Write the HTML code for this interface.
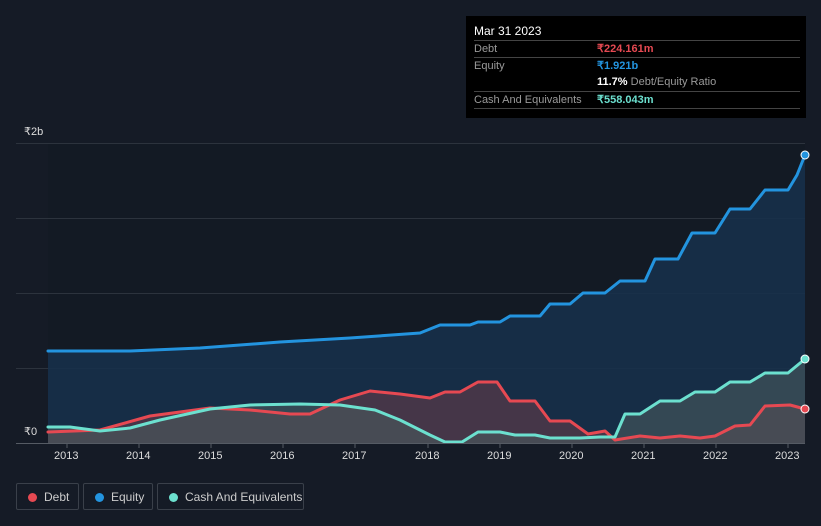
<!DOCTYPE html>
<html><head><meta charset="utf-8"><style>
body{margin:0;width:821px;height:526px;background:#151b26;font-family:"Liberation Sans",sans-serif;overflow:hidden;position:relative}
.tip{position:absolute;left:466px;top:16px;width:340px;height:102px;background:#000;color:#fff;font-size:11px}
.tip .row{position:absolute;left:8px;width:326px;border-top:1px solid #444;height:17px;line-height:17px;color:#9a9a9a}
.tip .v{position:absolute;left:123px;font-weight:bold}
.leg{position:absolute;top:483px;height:27px;border:1px solid #3a404a;border-radius:2px;color:#ccc;font-size:12px;line-height:27px;box-sizing:border-box;padding-left:27px}
.leg i{position:absolute;left:11px;top:9px;width:9px;height:9px;border-radius:50%}
.ax{position:absolute;top:450px;color:#ddd;font-size:11px}
</style></head><body>
<svg width="821" height="526" style="position:absolute;left:0;top:0">
<rect x="48" y="143" width="757" height="300" fill="#131a24"/>
<g stroke="#2c333d" stroke-width="1"><line x1="16" y1="143.5" x2="805" y2="143.5"/><line x1="16" y1="218.5" x2="805" y2="218.5"/><line x1="16" y1="293.5" x2="805" y2="293.5"/><line x1="16" y1="368.5" x2="805" y2="368.5"/></g>
<polygon fill="#17304a" fill-opacity="0.9" points="48,443 48,351 130,351 200,348 280,342 350,338 420,333 435,327 440,325 470,325 478,322 500,322 510,316 540,316 550,304 570,304 583,293 605,293 620,281 645,281 655,259 678,259 692,233 715,233 730,209 750,209 765,190 788,190 797,175 805,155 805,443"/>
<polygon fill="#5a3a48" fill-opacity="0.7" points="48,443 48,432 100,430 150,416 210,408 250,410 290,414 310,414 340,400 370,391 400,394 430,398 445,392 460,392 478,382 497,382 510,401 535,401 550,421 570,421 588,434 605,431 615,440 640,436 660,438 680,436 700,438 715,436 735,426 750,425 765,406 790,405 805,409 805,443"/>
<polygon fill="#4a5a5e" fill-opacity="0.6" points="48,443 48,427 70,427 100,431 130,428 160,420 210,409 250,405 300,404 340,405 375,410 400,420 430,435 445,442 462,442 478,432 500,432 515,435 535,435 550,438 580,438 600,437 615,437 625,414 640,414 660,401 680,401 695,392 715,392 730,382 750,382 765,373 788,373 805,359 805,443"/>
<g fill="none" stroke-width="3" stroke-linejoin="round" stroke-linecap="round">
<polyline stroke="#2394df" points="48,351 130,351 200,348 280,342 350,338 420,333 435,327 440,325 470,325 478,322 500,322 510,316 540,316 550,304 570,304 583,293 605,293 620,281 645,281 655,259 678,259 692,233 715,233 730,209 750,209 765,190 788,190 797,175 805,155"/>
<polyline stroke="#e64952" points="48,432 100,430 150,416 210,408 250,410 290,414 310,414 340,400 370,391 400,394 430,398 445,392 460,392 478,382 497,382 510,401 535,401 550,421 570,421 588,434 605,431 615,440 640,436 660,438 680,436 700,438 715,436 735,426 750,425 765,406 790,405 805,409"/>
<polyline stroke="#6ce0cf" points="48,427 70,427 100,431 130,428 160,420 210,409 250,405 300,404 340,405 375,410 400,420 430,435 445,442 462,442 478,432 500,432 515,435 535,435 550,438 580,438 600,437 615,437 625,414 640,414 660,401 680,401 695,392 715,392 730,382 750,382 765,373 788,373 805,359"/>
</g>
<line x1="16" y1="443.5" x2="805" y2="443.5" stroke="#555b64"/>
<g stroke="#555b64"><line x1="67" y1="443" x2="67" y2="448"/><line x1="139" y1="443" x2="139" y2="448"/><line x1="211" y1="443" x2="211" y2="448"/><line x1="283" y1="443" x2="283" y2="448"/><line x1="355" y1="443" x2="355" y2="448"/><line x1="428" y1="443" x2="428" y2="448"/><line x1="500" y1="443" x2="500" y2="448"/><line x1="572" y1="443" x2="572" y2="448"/><line x1="644" y1="443" x2="644" y2="448"/><line x1="716" y1="443" x2="716" y2="448"/><line x1="788" y1="443" x2="788" y2="448"/></g>
<circle cx="805" cy="155" r="4" fill="#2394df" stroke="#fff" stroke-width="1"/>
<circle cx="805" cy="359" r="4" fill="#6ce0cf" stroke="#fff" stroke-width="1"/>
<circle cx="805" cy="409" r="4" fill="#e64952" stroke="#fff" stroke-width="1"/>
</svg>
<div style="position:absolute;left:24px;top:125px;color:#ddd;font-size:11px">₹2b</div>
<div style="position:absolute;left:24px;top:425px;color:#ddd;font-size:11px">₹0</div>
<div class="ax" style="left:54px">2013</div><div class="ax" style="left:126px">2014</div><div class="ax" style="left:198px">2015</div><div class="ax" style="left:270px">2016</div><div class="ax" style="left:342px">2017</div><div class="ax" style="left:415px">2018</div><div class="ax" style="left:487px">2019</div><div class="ax" style="left:559px">2020</div><div class="ax" style="left:631px">2021</div><div class="ax" style="left:703px">2022</div><div class="ax" style="left:775px">2023</div>
<div class="tip">
<div style="position:absolute;left:8px;top:8px;font-size:12px">Mar 31 2023</div>
<div class="row" style="top:24px">Debt<span class="v" style="color:#e64952">₹224.161m</span></div>
<div class="row" style="top:41px">Equity<span class="v" style="color:#2394df">₹1.921b</span></div>
<div class="row" style="top:58px;border-top:none"><span class="v" style="color:#fff">11.7% <span style="color:#9a9a9a;font-weight:normal">Debt/Equity Ratio</span></span></div>
<div class="row" style="top:75px">Cash And Equivalents<span class="v" style="color:#6ce0cf">₹558.043m</span></div>
<div class="row" style="top:92px;height:0"></div>
</div>
<div class="leg" style="left:16px;width:63px"><i style="background:#e64952"></i>Debt</div>
<div class="leg" style="left:83px;width:70px"><i style="background:#2394df"></i>Equity</div>
<div class="leg" style="left:157px;width:147px"><i style="background:#6ce0cf"></i>Cash And Equivalents</div>
</body></html>
